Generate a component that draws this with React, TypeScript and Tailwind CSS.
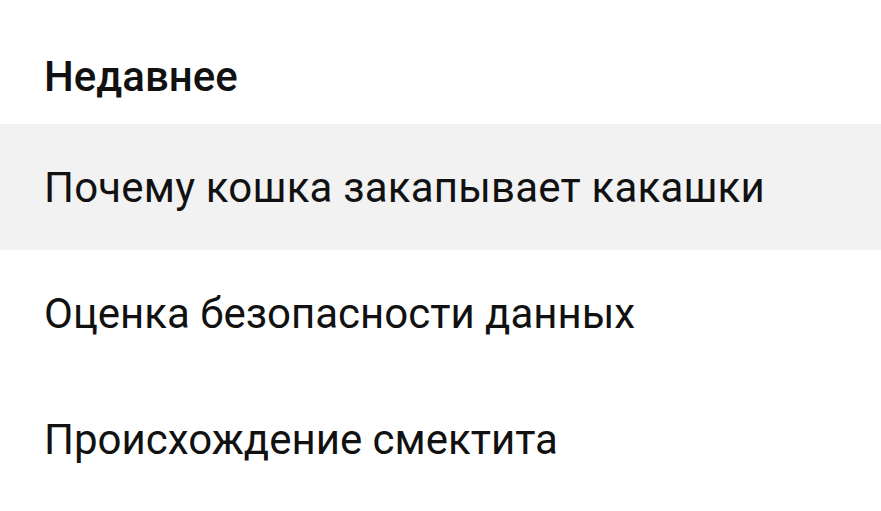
const ITEMS = [
  { title: "Почему кошка закапывает какашки", active: true },
  { title: "Оценка безопасности данных", active: false },
  { title: "Происхождение смектита", active: false },
];

export default function App() {
  return (
    <div className="min-h-[511px] w-full bg-white font-['Roboto',sans-serif] text-[#111111]">
      {/* Section header */}
      <div className="px-[44px] pt-[52px] pb-[23px]">
        <h2 className="text-[42px] leading-[49px] font-medium">Недавнее</h2>
      </div>

      {/* Recent items */}
      <ul>
        {ITEMS.map((item) => (
          <li
            key={item.title}
            className={
              item.active
                ? "flex h-[126px] items-center bg-[#f2f2f2] px-[44px]"
                : "flex h-[126px] items-center px-[44px]"
            }
          >
            <span
              className={
                item.active
                  ? "text-[42px] leading-[49px] font-normal tracking-[0.2px]"
                  : "text-[42px] leading-[49px] font-normal"
              }
            >
              {item.title}
            </span>
          </li>
        ))}
      </ul>
    </div>
  );
}
